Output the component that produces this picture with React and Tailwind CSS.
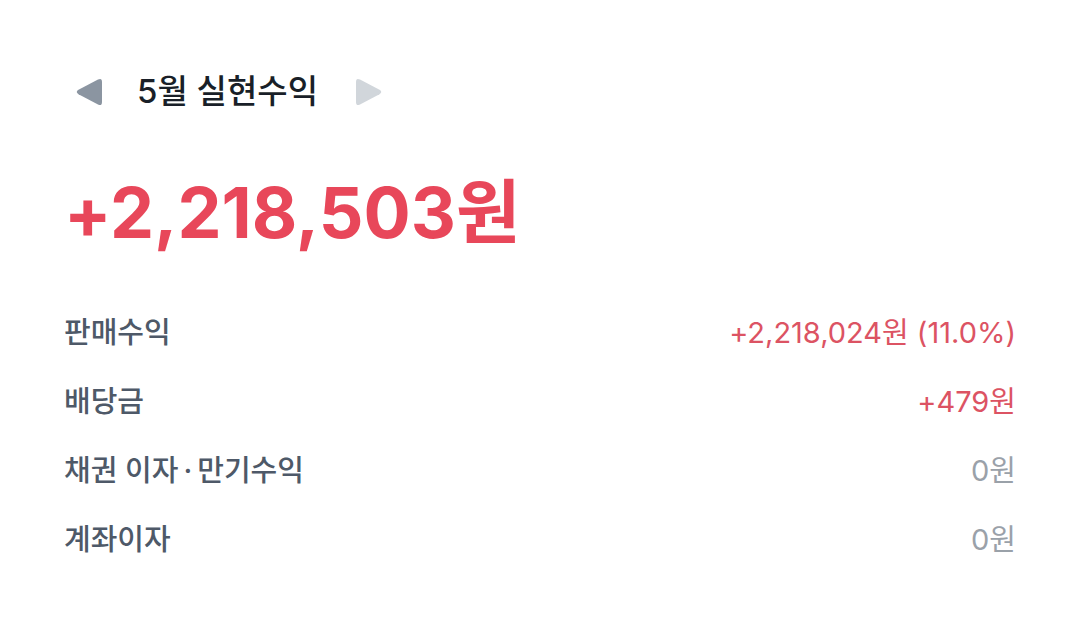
const font = { fontFamily: 'Inter, "Noto Sans CJK KR", sans-serif' };

function Arrow({ dir, color }) {
    return (
        <svg width="28" height="30" viewBox="0 0 28 30" className={dir === "right" ? "scale-x-[-1]" : ""}>
            <path d="M23 2.5 Q27 0.5 27 5 L27 25 Q27 29.5 23 27.5 L3.5 17.2 Q0 15 3.5 12.8 Z" fill={color} />
        </svg>
    );
}

const rows = [
    { label: <>판매수익</>, key: "sale", value: "+2,218,024원 (11.0%)", red: true },
    { label: <>배당금</>, key: "div", value: "+479원", red: true },
    { label: <>채권 이자<span className="mx-[5px]">·</span>만기수익</>, key: "bond", value: "0원", red: false },
    { label: <>계좌이자</>, key: "acc", value: "0원", red: false },
];

export default function App() {
    return (
        <div className="w-[1080px] h-[629px] bg-white px-16 pt-[68px]" style={font}>
            <div className="h-12 flex items-center">
                <div className="ml-[11px]">
                    <Arrow dir="left" color="#8b95a1" />
                </div>
                <h1 className="ml-[34px] text-[33px] font-medium text-[#191f28]">5월 실현수익</h1>
                <div className="ml-[37px]">
                    <Arrow dir="right" color="#d1d6db" />
                </div>
            </div>

            <div className="mt-[55px] h-[84px] flex items-center">
                <span className="text-[70px] font-bold text-[#e8475a] leading-none">+2,218,503원</span>
            </div>

            <div className="mt-[43px] flex flex-col">
                {rows.map(r => (
                    <div key={r.key} className="h-[69px] flex items-center justify-between">
                        <span className="text-[29px] text-[#4e5968] font-medium">{r.label}</span>
                        <span className={"text-[29px] " + (r.red ? "text-[#dc5363]" : "text-[#9aa1a9]")}>{r.value}</span>
                    </div>
                ))}
            </div>
        </div>
    );
}
